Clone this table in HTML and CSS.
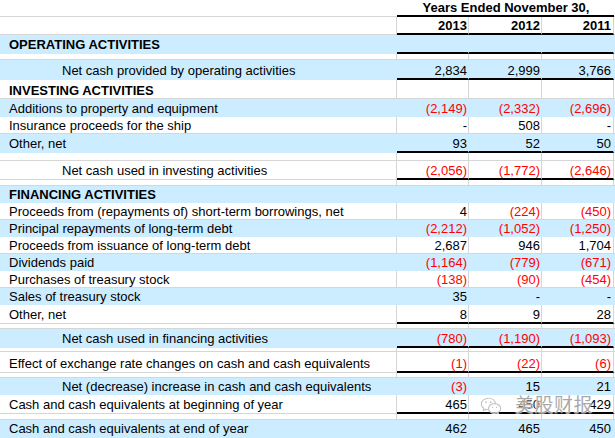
FILE: index.html
```html
<!DOCTYPE html>
<html>
<head>
<meta charset="utf-8">
<link rel="stylesheet" href="styles.css">
</head>
<body>
<div class="sheet">
  <div class="row h17 top">
    <div class="l"></div>
    <div class="span">Years Ended November 30,</div>
    <div class="e"></div>
  </div>
  <div class="row h18 thick b">
    <div class="l"></div><div class="n c1">2013</div><div class="n c2">2012</div><div class="n c3">2011</div><div class="e"></div>
  </div>
  <div class="row h19 blue thick">
    <div class="l b">OPERATING ACTIVITIES</div><div class="n c1"></div><div class="n c2"></div><div class="n c3"></div><div class="e"></div>
  </div>
  <div class="row sp6"><div class="l"></div><div class="n"></div><div class="n"></div><div class="n"></div><div class="e"></div></div>
  <div class="row h20 blue thick">
    <div class="l ind">Net cash provided by operating activities</div><div class="n c1">2,834</div><div class="n c2">2,999</div><div class="n c3">3,766</div><div class="e"></div>
  </div>
  <div class="row h19">
    <div class="l b">INVESTING ACTIVITIES</div><div class="n"></div><div class="n"></div><div class="n"></div><div class="e"></div>
  </div>
  <div class="row h18 blue">
    <div class="l">Additions to property and equipment</div><div class="n c1 neg">(2,149)</div><div class="n c2 neg">(2,332)</div><div class="n c3 neg">(2,696)</div><div class="e"></div>
  </div>
  <div class="row h17">
    <div class="l">Insurance proceeds for the ship</div><div class="n c1">-</div><div class="n c2">508</div><div class="n c3">-</div><div class="e"></div>
  </div>
  <div class="row h19 blue thick">
    <div class="l">Other, net</div><div class="n c1">93</div><div class="n c2">52</div><div class="n c3">50</div><div class="e"></div>
  </div>
  <div class="row sp8"><div class="l"></div><div class="n"></div><div class="n"></div><div class="n"></div><div class="e"></div></div>
  <div class="row h19 thick">
    <div class="l ind">Net cash used in investing activities</div><div class="n c1 neg">(2,056)</div><div class="n c2 neg">(1,772)</div><div class="n c3 neg">(2,646)</div><div class="e"></div>
  </div>
  <div class="row sp6"><div class="l"></div><div class="n"></div><div class="n"></div><div class="n"></div><div class="e"></div></div>
  <div class="row h17 blue">
    <div class="l b">FINANCING ACTIVITIES</div><div class="n"></div><div class="n"></div><div class="n"></div><div class="e"></div>
  </div>
  <div class="row h17">
    <div class="l">Proceeds from (repayments of) short-term borrowings, net</div><div class="n c1">4</div><div class="n c2 neg">(224)</div><div class="n c3 neg">(450)</div><div class="e"></div>
  </div>
  <div class="row h17 blue">
    <div class="l">Principal repayments of long-term debt</div><div class="n c1 neg">(2,212)</div><div class="n c2 neg">(1,052)</div><div class="n c3 neg">(1,250)</div><div class="e"></div>
  </div>
  <div class="row h17">
    <div class="l">Proceeds from issuance of long-term debt</div><div class="n c1">2,687</div><div class="n c2">946</div><div class="n c3">1,704</div><div class="e"></div>
  </div>
  <div class="row h17 blue">
    <div class="l">Dividends paid</div><div class="n c1 neg">(1,164)</div><div class="n c2 neg">(779)</div><div class="n c3 neg">(671)</div><div class="e"></div>
  </div>
  <div class="row h17">
    <div class="l">Purchases of treasury stock</div><div class="n c1 neg">(138)</div><div class="n c2 neg">(90)</div><div class="n c3 neg">(454)</div><div class="e"></div>
  </div>
  <div class="row h17 blue">
    <div class="l">Sales of treasury stock</div><div class="n c1">35</div><div class="n c2">-</div><div class="n c3">-</div><div class="e"></div>
  </div>
  <div class="row h19 thick">
    <div class="l">Other, net</div><div class="n c1">8</div><div class="n c2">9</div><div class="n c3">28</div><div class="e"></div>
  </div>
  <div class="row sp5"><div class="l"></div><div class="n"></div><div class="n"></div><div class="n"></div><div class="e"></div></div>
  <div class="row h19 blue thick">
    <div class="l ind">Net cash used in financing activities</div><div class="n c1 neg">(780)</div><div class="n c2 neg">(1,190)</div><div class="n c3 neg">(1,093)</div><div class="e"></div>
  </div>
  <div class="row sp4"><div class="l"></div><div class="n"></div><div class="n"></div><div class="n"></div><div class="e"></div></div>
  <div class="row h21 thick">
    <div class="l">Effect of exchange rate changes on cash and cash equivalents</div><div class="n c1 neg">(1)</div><div class="n c2 neg">(22)</div><div class="n c3 neg">(6)</div><div class="e"></div>
  </div>
  <div class="row sp5"><div class="l"></div><div class="n"></div><div class="n"></div><div class="n"></div><div class="e"></div></div>
  <div class="row h17 blue">
    <div class="l ind">Net (decrease) increase in cash and cash equivalents</div><div class="n c1 neg">(3)</div><div class="n c2">15</div><div class="n c3">21</div><div class="e"></div>
  </div>
  <div class="row h19 thick">
    <div class="l">Cash and cash equivalents at beginning of year</div><div class="n c1">465</div><div class="n c2">450</div><div class="n c3">429</div><div class="e"></div>
  </div>
  <div class="row sp6"><div class="l"></div><div class="n"></div><div class="n"></div><div class="n"></div><div class="e"></div></div>
  <div class="row h18 blue last">
    <div class="l">Cash and cash equivalents at end of year</div><div class="n c1">462</div><div class="n c2">465</div><div class="n c3">450</div><div class="e"></div>
  </div>

  <div class="watermark">
    <svg class="wx" width="22" height="17" viewBox="0 0 22 17">
      <path d="M8.5 1.2C4.5 1.2 1.3 3.8 1.3 7c0 1.8 1 3.4 2.6 4.5l-0.7 2.2 2.6-1.4c0.9 0.3 1.8 0.4 2.7 0.4" fill="rgba(255,255,255,0.6)" stroke="#c4c4c4" stroke-width="1.1" stroke-linejoin="round"/>
      <path d="M15.7 6.8C15.2 3.6 12.2 1.2 8.5 1.2" fill="none" stroke="#c4c4c4" stroke-width="1.1"/>
      <path d="M14.6 6.6c-3.4 0-6.1 2.2-6.1 4.9s2.7 4.9 6.1 4.9c0.7 0 1.4-0.1 2-0.3l2 1.1-0.5-1.7c1.6-0.9 2.6-2.3 2.6-4 0-2.7-2.7-4.9-6.1-4.9z" fill="rgba(255,255,255,0.6)" stroke="#c4c4c4" stroke-width="1.1" stroke-linejoin="round"/>
      <circle cx="6" cy="5.2" r="0.9" fill="#c4c4c4"/>
      <circle cx="10.8" cy="5.2" r="0.9" fill="#c4c4c4"/>
      <circle cx="12.5" cy="10.2" r="0.75" fill="#c4c4c4"/>
      <circle cx="16.7" cy="10.2" r="0.75" fill="#c4c4c4"/>
    </svg>
    <span class="wtext">美股财报</span>
  </div>
</div>
</body>
</html>
```

FILE: styles.css
```css
* {
  box-sizing: border-box;
}

body {
  margin: 0;
  background: #ffffff;
  color: #000000;
  font-family: "Liberation Sans", Arial, sans-serif;
  font-size: 13px;
  width: 615px;
  height: 438px;
  overflow: hidden;
}

.sheet {
  position: relative;
  width: 615px;
}

.row {
  display: grid;
  grid-template-columns: 397px 72px 73px 72px 1fr;
}

.row > div {
  display: flex;
  align-items: flex-end;
  line-height: 15px;
  white-space: nowrap;
  border-bottom: 1px solid #d6d6d6;
}

.row > .l {
  padding-left: 9px;
  border-right: 1px solid #d6d6d6;
  overflow: visible;
}

.row > .l.ind {
  padding-left: 62px;
}

.row > .n {
  justify-content: flex-end;
  border-right: 1px solid #d6d6d6;
}

.row > .c1,
.row > .c2 {
  padding-right: 1px;
}

.row > .c3 {
  padding-right: 2px;
}

.b,
.row.b > div {
  font-weight: bold;
}

.neg {
  color: #ff0000;
}

/* row heights */
.h17 { height: 17px; }
.h18 { height: 18px; }
.h19 { height: 19px; }
.h20 { height: 20px; }
.h21 { height: 21px; }
.sp4 { height: 4px; }
.sp5 { height: 5px; }
.sp6 { height: 6px; }
.sp8 { height: 8px; }

/* filled rows hide gridlines */
.row.blue > div {
  background: #ccecff;
  border-bottom-color: transparent;
  border-right-color: transparent;
}

/* medium bottom border under number columns */
.row.thick > .n {
  border-bottom: 2px solid #000000;
}

.row.thick > .l,
.row.thick > .e {
  padding-bottom: 1px;
}

.row.last > div {
  padding-bottom: 1px;
}

/* header row */
.row.top > .l {
  border-right-color: transparent;
}

.row.top > .span {
  grid-column: 2 / 5;
  justify-content: center;
  font-weight: bold;
  border-bottom: 2px solid #000000;
  line-height: 14px;
  padding-left: 1px;
}

/* watermark overlay */
.watermark {
  position: absolute;
  left: 480px;
  top: 394px;
  display: flex;
  align-items: center;
  gap: 13px;
  pointer-events: none;
}

.wx {
  display: block;
  margin-top: 2px;
}

.wtext {
  font-family: "Noto Sans CJK SC", sans-serif;
  font-size: 19px;
  line-height: 20px;
  color: rgba(140, 140, 140, 0.75);
  text-shadow: 0 0 1px #ffffff, 0 0 2px #ffffff;
  letter-spacing: 0.5px;
}
```
